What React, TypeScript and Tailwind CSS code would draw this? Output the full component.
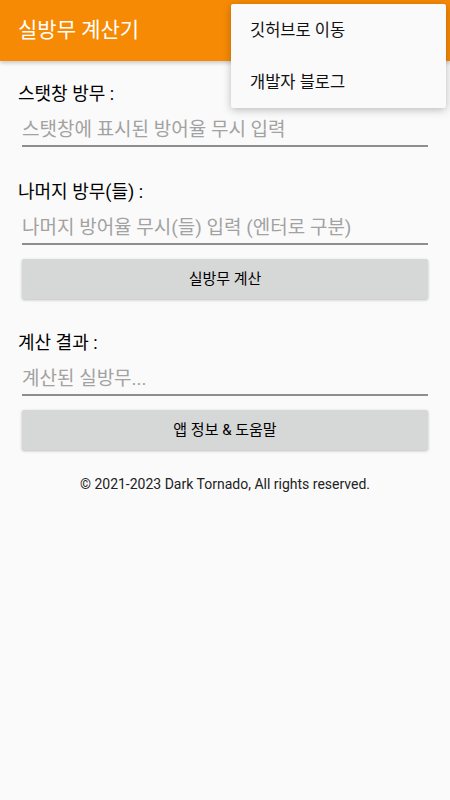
const font = { fontFamily: 'Roboto, "Noto Sans CJK KR", sans-serif' };

const Field = ({ label, placeholder, top }: { label: string; placeholder: string; top: string }) => (
    <div className={top}>
        <div className="text-[18px] leading-[24px] text-black">{label}</div>
        <input
            readOnly
            placeholder={placeholder}
            className="mx-[4px] mt-[12px] block w-[calc(100%-8px)] border-b-2 border-[#8e8e8e] bg-transparent pb-[3px] text-[19px] leading-[24px] outline-none placeholder:text-[#a2a2a2]"
        />
    </div>
);

const GrayButton = ({ children, top }: { children: string; top: string }) => (
    <button className={`${top} mx-[4px] flex h-[40px] w-[calc(100%-8px)] items-center justify-center rounded-[2px] bg-[#d6d7d7] text-[15px] text-black shadow-[0_1px_3px_rgba(0,0,0,0.25)]`}>
        {children}
    </button>
);

export default function App() {
    return (
        <div className="relative h-[800px] w-[450px] overflow-hidden bg-[#fafafa]" style={font}>
            {/* Toolbar */}
            <div className="flex h-[61px] items-center bg-[#f68a05] px-[18px] shadow-[0_2px_4px_rgba(0,0,0,0.2)]">
                <h1 className="text-[21px] text-white">실방무 계산기</h1>
            </div>

            {/* Form */}
            <div className="px-[18px]">
                <Field top="mt-[21px]" label="스탯창 방무 :" placeholder="스탯창에 표시된 방어율 무시 입력" />
                <Field top="mt-[33px]" label="나머지 방무(들) :" placeholder="나머지 방어율 무시(들) 입력 (엔터로 구분)" />
                <GrayButton top="mt-[14px]">실방무 계산</GrayButton>
                <Field top="mt-[32px]" label="계산 결과 :" placeholder="계산된 실방무..." />
                <GrayButton top="mt-[14px]">앱 정보 &amp; 도움말</GrayButton>
                <p className="mt-[25px] text-center text-[14px] leading-[18px] text-[#222]">
                    © 2021-2023 Dark Tornado, All rights reserved.
                </p>
            </div>

            {/* Overflow menu */}
            <div className="absolute right-[4px] top-[4px] w-[215px] rounded-[2px] bg-[#fafafa] shadow-[0_2px_8px_rgba(0,0,0,0.25)]">
                <div className="flex h-[52px] items-center px-[19px] pt-[3px] text-[16.5px] text-[#111]">깃허브로 이동</div>
                <div className="flex h-[52px] items-center px-[19px] pt-[3px] text-[16.5px] text-[#111]">개발자 블로그</div>
            </div>
        </div>
    );
}
